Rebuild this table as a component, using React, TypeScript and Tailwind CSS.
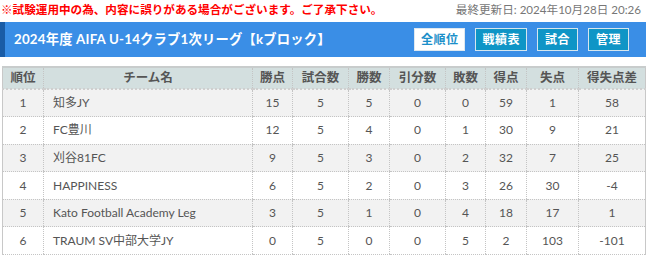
import React from "react";

const rows = [
  ["1", "知多JY", "15", "5", "5", "0", "0", "59", "1", "58"],
  ["2", "FC豊川", "12", "5", "4", "0", "1", "30", "9", "21"],
  ["3", "刈谷81FC", "9", "5", "3", "0", "2", "32", "7", "25"],
  ["4", "HAPPINESS", "6", "5", "2", "0", "3", "26", "30", "-4"],
  ["5", "Kato Football Academy Leg", "3", "5", "1", "0", "4", "18", "17", "1"],
  ["6", "TRAUM SV中部大学JY", "0", "5", "0", "0", "5", "2", "103", "-101"],
];

const heads = ["順位", "チーム名", "勝点", "試合数", "勝数", "引分数", "敗数", "得点", "失点", "得失点差"];
const widths = [41, 209, 40, 56, 41, 56, 40, 41, 52, 67];

export default function App() {
  return (
    <div
      className="w-[656px] h-[257px] bg-white overflow-hidden"
      style={{ fontFamily: 'Lato, "Noto Sans CJK JP", sans-serif' }}
    >
      <div className="flex items-center justify-between h-[20px] pr-[15px]">
        <span className="text-[11.6px] font-bold text-[#ff0000] leading-none pl-[1px]">
          ※試験運用中の為、内容に誤りがある場合がございます。ご了承下さい。
        </span>
        <span className="text-[11.6px] text-[#777] leading-none">最終更新日: 2024年10月28日 20:26</span>
      </div>
      <div className="mt-[2px] w-[646px] h-[35px] bg-[#3a8ee6] border-l-[5px] border-[#1a5ca6] flex items-center justify-between pl-[9px] pr-[17px]">
        <span className="text-white font-bold text-[13.3px] tracking-[0.2px]">
          2024年度 AIFA U-14クラブ1次リーグ【kブロック】
        </span>
        <div className="flex gap-[10px] text-[12px] font-bold">
          <span className="h-[23px] px-[6px] flex items-center bg-white text-[#1b8fc9] border border-[#dfe8ef] tracking-[0.5px]">全順位</span>
          <span className="h-[23px] px-[6px] flex items-center bg-[#0f95c6] text-white border border-[#d6e6ee] tracking-[0.5px]">戦績表</span>
          <span className="h-[23px] px-[7px] flex items-center bg-[#0f95c6] text-white border border-[#d6e6ee] tracking-[0.5px]">試合</span>
          <span className="h-[23px] px-[7px] flex items-center bg-[#0f95c6] text-white border border-[#d6e6ee] tracking-[0.5px]">管理</span>
        </div>
      </div>
      <table className="mt-[9px] ml-[2px] w-[643px] border-collapse table-fixed text-[12px] text-[#555] border-l border-r border-[#c8c8c8]">
        <colgroup>
          {widths.map((w, i) => (
            <col key={i} style={{ width: w }} />
          ))}
        </colgroup>
        <thead>
          <tr className="h-[22px] bg-[#d3dfdf] border-t-2 border-[#c8cccc]">
            {heads.map((h, i) => (
              <th
                key={i}
                className="font-bold text-[12.5px] text-[#555] text-center border-l border-dotted border-[#c4c4c4] first:border-l-0 border-b-2 border-b-[#cfcfcf] p-0"
              >
                {h}
              </th>
            ))}
          </tr>
        </thead>
        <tbody>
          {rows.map((r, ri) => (
            <tr key={ri} className={`h-[27.6px] ${ri % 2 === 0 ? "bg-[#f2f2f2]" : "bg-white"}`}>
              {r.map((c, ci) => (
                <td
                  key={ci}
                  className={`border-b border-dotted border-[#c4c4c4] p-0 ${ci === 0 ? "" : "border-l"} ${
                    ci === 1 ? "text-left pl-[9px]" : "text-center"
                  }`}
                >
                  {c}
                </td>
              ))}
            </tr>
          ))}
        </tbody>
      </table>
    </div>
  );
}
